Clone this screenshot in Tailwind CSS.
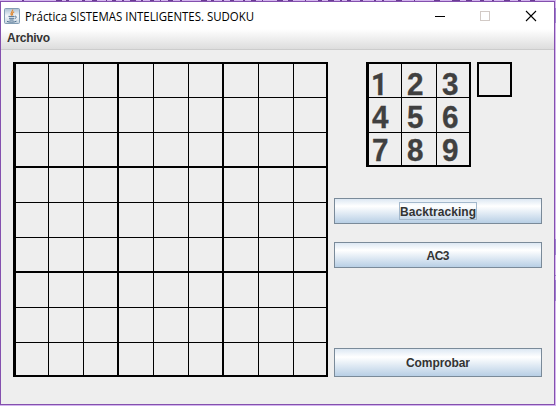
<!DOCTYPE html>
<html lang="es">
<head>
<meta charset="utf-8">
<title>Práctica SISTEMAS INTELIGENTES. SUDOKU</title>
<script src="https://cdn.jsdelivr.net/npm/@tailwindcss/browser@4"></script>
</head>
<body class="w-[556px] h-[406px] overflow-hidden bg-[#d3b5ee] pt-px font-['Liberation_Sans',sans-serif]">
<svg class="absolute left-0 top-0" width="556" height="406"><path d="M22 .5h2M56 .5h6M66 .5h3M82 .5h3M92 .5h5M106 .5h1M112 .5h4M122 .5h2M130 .5h6M141 .5h2M150 .5h4M160 .5h1M168 .5h5M180 .5h2M201 .5h6M211 .5h3M222 .5h2M230 .5h4M243 .5h2M251 .5h5M262 .5h1M277 .5h6M288 .5h5M305 .5h1M318 .5h4M328 .5h6M340 .5h2M347 .5h4M360 .5h3M374 .5h2M382 .5h2M396 .5h6M414 .5h1M434 .5h6M452 .5h8M466 .5h6M480 .5h4M492 .5h2M504 .5h6M518 .5h3M530 .5h5" stroke="#6a3c94"/><path d="M555.5 8v15M555.5 239v16M555.5 275v1M555.5 280v21" stroke="#9d7fd0"/></svg>
<div class="w-[555px] h-[404px] border border-[#8450ae] bg-[#eeeeee] flex flex-col">
  <header class="h-[27px] shrink-0 bg-white flex items-center pl-[3px]">
    <svg width="16" height="16" viewBox="0 0 16 16" class="shrink-0">
      <defs><linearGradient id="j" x2="0" y2="1"><stop stop-color="#a9c0d3"/><stop offset=".5" stop-color="#f4f7f9"/><stop offset="1" stop-color="#c3d2df"/></linearGradient></defs>
      <rect x=".5" y=".5" width="15" height="15" rx="1" fill="url(#j)" stroke="#839db4"/>
      <path d="M8.6 1.5C9.3 3.5 5.5 4.2 7.6 7.6M10.2 3.8C7.8 5 8.2 5.8 8.8 7.4" fill="none" stroke="#e08a35" stroke-width="1.2"/>
      <path d="M4.5 8.4H10.6M5 10.3H10.2M5.5 12H9.6M11 8.2C13 8 12.6 10 10.8 10.5M3 13.4C5 14.4 10.5 14.4 12.5 13.2" fill="none" stroke="#4f7191" stroke-width="1"/>
    </svg>
    <h1 class="ml-[5px] w-[230px]"><svg class="block overflow-visible text-[12px] font-['Open_Sans',sans-serif]" width="230" height="16"><text x="0" y="12.5" textLength="229" lengthAdjust="spacingAndGlyphs">Práctica SISTEMAS INTELIGENTES. SUDOKU</text></svg></h1>
    <svg class="ml-auto mr-[17px]" width="104" height="12" viewBox="0 0 104 12" fill="none" shape-rendering="crispEdges">
      <path d="M2 6.5h10" stroke="#000"/><rect x="47.5" y="1.5" width="9" height="9" stroke="#d2cac6"/>
      <path d="M93 1l10 10M103 1l-10 10" stroke="#000" stroke-width="1.1" shape-rendering="auto"/>
    </svg>
  </header>
  <nav class="h-[21px] shrink-0 border-b border-[#cccccc] bg-linear-to-b from-white to-[#dddddd] pl-[6px] text-[12px] font-bold"><svg class="block" width="60" height="20"><text x="0" y="13" fill="#333" textLength="43">Archivo</text></svg></nav>
  <main class="flex pl-[12px] pt-[12px] items-start">
    <div id="board" class="grid grid-cols-[33px_repeat(7,35px)_34px] grid-rows-[34px_repeat(7,35px)_34px] border-black border-l-3 border-t-2"></div>
    <section class="ml-[6px] w-[208px] h-[315px] flex flex-col text-[12px] font-bold text-[#333]">
      <div class="flex items-start pl-[32px]">
        <div id="picker" class="grid grid-cols-[33px_35px_34px] grid-rows-[34px_35px_34px] border-black border-l-3 border-t-2"></div>
        <div class="ml-[6px] size-[35px] border-2 border-black"></div>
      </div>
      <button class="mt-[31px] h-[26px] border border-[#7a8a99] bg-linear-to-b from-[#dde8f3] via-white via-30% to-[#b8cfe5] flex items-center justify-center"><span class="border border-[#a3b8cc] w-[78px] h-[18px]"><svg class="block" width="76" height="16"><text x="0" y="13" fill="#333" textLength="76">Backtracking</text></svg></span></button>
      <button class="mt-[18px] h-[26px] border border-[#7a8a99] bg-linear-to-b from-[#dde8f3] via-white via-30% to-[#b8cfe5] flex items-center justify-center"><svg width="24" height="16"><text x="0.5" y="13" fill="#333" textLength="23">AC3</text></svg></button>
      <button class="mt-auto h-[29px] border border-[#7a8a99] bg-linear-to-b from-[#dde8f3] via-white via-30% to-[#b8cfe5] flex items-center justify-center"><svg width="64" height="16"><text x="0" y="12" fill="#333" textLength="64">Comprobar</text></svg></button>
    </section>
  </main>
</div>
<script>
const cellBorders = (r, c) =>
  'border-black ' + (c % 3 === 2 ? 'border-r-2 ' : 'border-r ') + (r % 3 === 2 ? 'border-b-2' : 'border-b');

const board = document.getElementById('board');
for (let r = 0; r < 9; r++) for (let c = 0; c < 9; c++) {
  const cell = document.createElement('div');
  cell.className = cellBorders(r, c);
  board.append(cell);
}

const picker = document.getElementById('picker');
const baselines = [31, 29.5, 28];
for (let n = 1; n <= 9; n++) {
  const r = Math.floor((n - 1) / 3), c = (n - 1) % 3;
  const cell = document.createElement('div');
  cell.className = cellBorders(r, c) + (n === 1 ? " font-['Roboto',sans-serif]" : '');
  cell.innerHTML = `<svg class="block overflow-visible text-[31px]" width="32" height="32"><text x="${c ? 5 : n === 1 ? 2 : 3}" y="${baselines[r]}" textLength="16.5" lengthAdjust="spacingAndGlyphs" fill="#404040" stroke="#404040" stroke-width=".3">${n}</text></svg>`;
  picker.append(cell);
}
</script>
</body>
</html>
